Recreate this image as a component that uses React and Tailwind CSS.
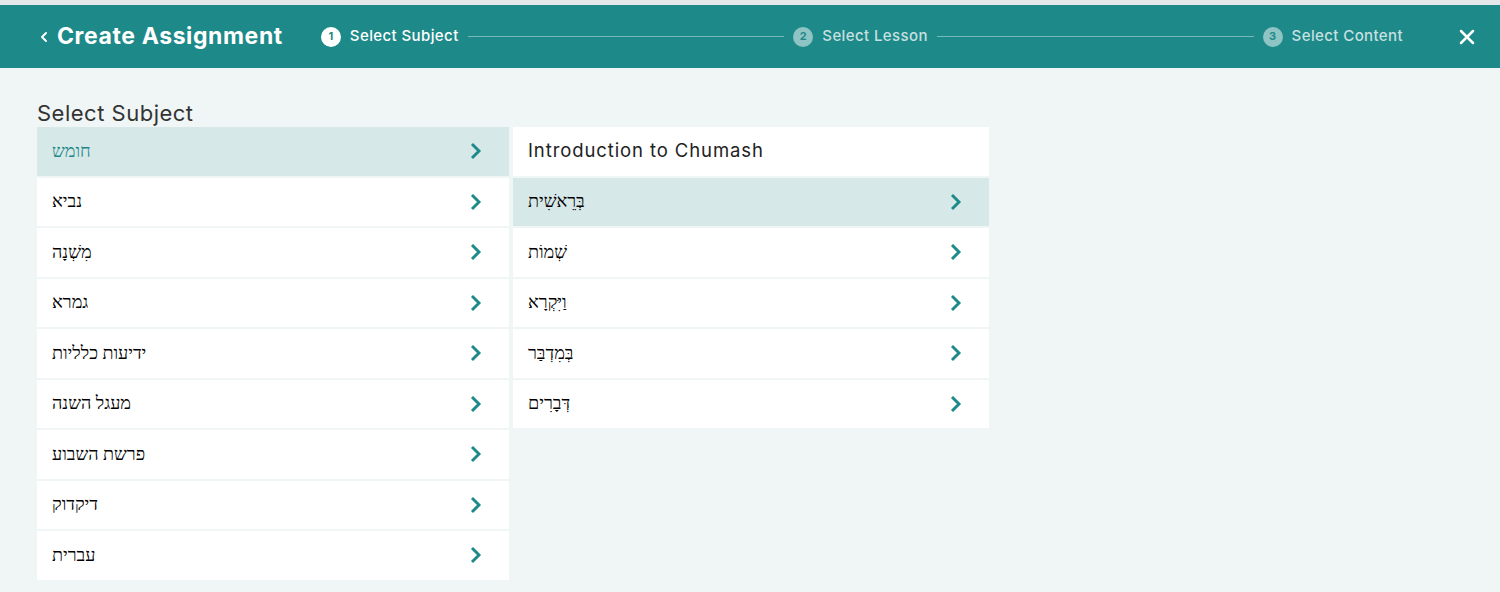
import React from "react";
import { ChevronLeft, X } from "lucide-react";

const subjects = [
  "חומש",
  "נביא",
  "מִשְׁנָה",
  "גמרא",
  "ידיעות כלליות",
  "מעגל השנה",
  "פרשת השבוע",
  "דיקדוק",
  "עברית",
];

const lessons = ["בְּרֵאשִׁית", "שְׁמוֹת", "וַיִּקְרָא", "בְּמִדְבַּר", "דְּבָרִים"];

export default function App() {
  return (
    <div className="min-h-screen bg-[#f0f5f5] font-['Inter',sans-serif]">
      <div className="h-[5px] bg-[#e4e7e7]" />
      <header className="h-[63px] bg-[#1d8989] text-white flex items-center pl-[36px] pr-[21px]">
        <button className="flex items-center gap-[5px]">
          <ChevronLeft size={16} strokeWidth={3} />
          <span className="text-[23px] font-bold tracking-[0.6px]">Create Assignment</span>
        </button>
        <div className="flex-1 flex items-center ml-[38px] mr-[52px]">
          <Step n={1} label="Select Subject" active />
          <div className="flex-1 h-px bg-white/40 mx-[9px]" />
          <Step n={2} label="Select Lesson" />
          <div className="flex-1 h-px bg-white/40 mx-[9px]" />
          <Step n={3} label="Select Content" />
        </div>
        <X size={24} strokeWidth={2.5} />
      </header>

      <main className="px-[37px] pt-[32px]">
        <h2 className="text-[22px] text-[#333] leading-[27px] tracking-[0.5px]">Select Subject</h2>
        <div className="flex gap-[4px] items-start">
          <ul className="w-[472px] flex flex-col gap-[2px]">
            {subjects.map((s, i) => (
              <Row key={s} label={s} selected={i === 0} teal={i === 0} />
            ))}
          </ul>
          <ul className="w-[476px] flex flex-col gap-[2px]">
            <li className="h-[48.5px] bg-white flex items-center pl-[15px] text-[18.5px] text-[#222] tracking-[0.9px]">
              Introduction to Chumash
            </li>
            {lessons.map((s, i) => (
              <Row key={s} label={s} selected={i === 0} />
            ))}
          </ul>
        </div>
      </main>
    </div>
  );
}

function Step({ n, label, active }) {
  return (
    <div className={active ? "flex items-center gap-[9px] text-white" : "flex items-center gap-[9px] text-white/75"}>
      <span
        className={
          active
            ? "w-[20px] h-[20px] rounded-full bg-white text-[#1d8989] text-[11px] font-bold flex items-center justify-center"
            : "w-[20px] h-[20px] rounded-full bg-white/50 text-[#1d8989] text-[11px] font-bold flex items-center justify-center"
        }
      >
        {n}
      </span>
      <span className="text-[15px] font-medium tracking-[0.4px]">{label}</span>
    </div>
  );
}

function Chevron() {
  return (
    <svg width="12" height="18" viewBox="0 0 12 18" fill="none" className="text-[#1d8989]">
      <path d="M2 2 L9 9 L2 16" stroke="currentColor" strokeWidth="2.9" strokeLinejoin="miter" />
    </svg>
  );
}

function Row({ label, selected, teal }) {
  return (
    <li
      className={
        selected
          ? "h-[48.5px] bg-[#d7e8e8] flex items-center justify-between pl-[15px] pr-[27px]"
          : "h-[48.5px] bg-white flex items-center justify-between pl-[15px] pr-[27px]"
      }
    >
      <span
        className={
          teal
            ? "text-[18px] text-[#1d8989] font-['Liberation_Serif',serif]"
            : "text-[18px] text-black font-['Liberation_Serif',serif]"
        }
      >
        {label}
      </span>
      <Chevron />
    </li>
  );
}
